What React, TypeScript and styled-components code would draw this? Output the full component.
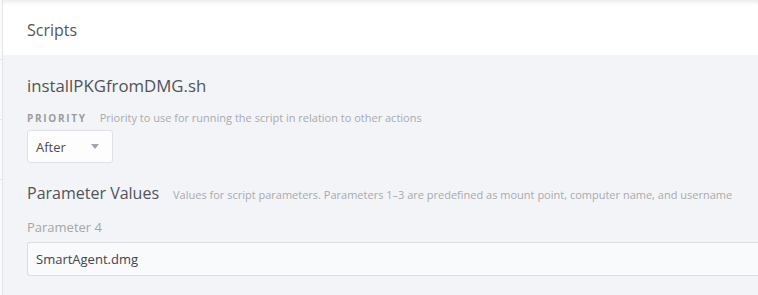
import React from 'react';
import styled, { createGlobalStyle } from 'styled-components';

const GlobalStyle = createGlobalStyle`
  html, body {
    margin: 0;
    padding: 0;
    background: #fafafb;
    overflow: hidden;
  }
  body {
    font-family: 'Open Sans', 'Liberation Sans', sans-serif;
    -webkit-font-smoothing: antialiased;
  }
`;

const Page = styled.div`
  display: flex;
  width: 758px;
  height: 295px;
  overflow: hidden;
`;

const Gutter = styled.div`
  width: 2px;
  flex-shrink: 0;
  display: flex;
  flex-direction: column;
`;

const GutterRow = styled.div`
  height: 59px;
  flex-shrink: 0;
  border-bottom: 1px solid #e6e7eb;
`;

const Panel = styled.section`
  flex: 1;
  min-width: 0;
  border-left: 1px solid #e3e5ea;
  display: flex;
  flex-direction: column;
`;

const Header = styled.header`
  height: 55px;
  flex-shrink: 0;
  background: #fff;
  box-shadow: inset 0 5px 4px -3px rgba(0, 0, 0, 0.09);
  display: flex;
  align-items: center;
  padding: 4px 0 0 24px;
  box-sizing: border-box;
`;

const HeaderTitle = styled.h2`
  margin: 0;
  font-size: 16px;
  font-weight: 400;
  color: #555659;
`;

const Body = styled.div`
  flex: 1;
  background: #f3f4f8;
  padding: 21px 0 0 24px;
`;

const ScriptName = styled.h3`
  margin: 0;
  font-size: 16.8px;
  font-weight: 400;
  color: #525356;
  line-height: 20px;
`;

const LabelRow = styled.div`
  display: flex;
  align-items: baseline;
  gap: 13px;
  margin-top: 14px;
`;

const Caps = styled.span`
  font-size: 10px;
  font-weight: 700;
  letter-spacing: 1.7px;
  color: #9b9ca0;
`;

const Hint = styled.span`
  font-size: 11px;
  color: #a9aaae;
`;

const Select = styled.div`
  margin-top: 5px;
  width: 86px;
  height: 33px;
  box-sizing: border-box;
  background: #fdfdfe;
  border: 1px solid #dfe1e6;
  border-radius: 3px;
  display: flex;
  align-items: center;
  justify-content: space-between;
  padding: 0 13px 0 8px;
  font-size: 13px;
  color: #4b4c50;
`;

const Caret = styled.span`
  width: 0;
  height: 0;
  border-left: 4px solid transparent;
  border-right: 4px solid transparent;
  border-top: 5px solid #9ea4b0;
`;

const SectionRow = styled.div`
  display: flex;
  align-items: baseline;
  gap: 14px;
  margin-top: 19px;
`;

const SectionTitle = styled.h3`
  margin: 0;
  font-size: 16px;
  font-weight: 400;
  color: #525356;
`;

const FieldLabel = styled.div<{ $first?: boolean }>`
  font-size: 13px;
  color: #a5a6aa;
  margin-top: ${(p) => (p.$first ? '14px' : '14px')};
`;

const Input = styled.div`
  margin-top: 6px;
  height: 34px;
  box-sizing: border-box;
  background: #f9fafc;
  border: 1px solid #dcdee4;
  border-right: none;
  border-radius: 3px 0 0 3px;
  display: flex;
  align-items: center;
  padding-left: 8px;
  font-size: 13px;
  color: #434448;
`;

export default function App() {
  return (
    <Page>
      <GlobalStyle />
      <Gutter>
        <GutterRow />
        <GutterRow />
        <GutterRow />
      </Gutter>
      <Panel>
        <Header>
          <HeaderTitle>Scripts</HeaderTitle>
        </Header>
        <Body>
          <ScriptName>installPKGfromDMG.sh</ScriptName>
          <LabelRow>
            <Caps>PRIORITY</Caps>
            <Hint>Priority to use for running the script in relation to other actions</Hint>
          </LabelRow>
          <Select>
            After
            <Caret />
          </Select>
          <SectionRow>
            <SectionTitle>Parameter Values</SectionTitle>
            <Hint>
              Values for script parameters. Parameters 1–3 are predefined as mount point, computer name, and username
            </Hint>
          </SectionRow>
          <FieldLabel $first>Parameter 4</FieldLabel>
          <Input>SmartAgent.dmg</Input>
          <FieldLabel>Parameter 5</FieldLabel>
        </Body>
      </Panel>
    </Page>
  );
}
